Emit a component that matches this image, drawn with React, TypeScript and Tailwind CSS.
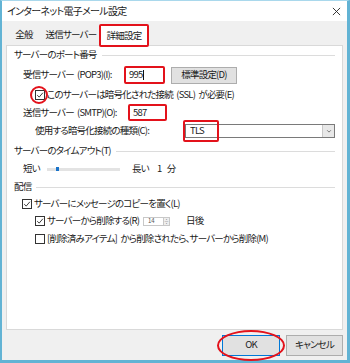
import React from "react";

const font = "font-['Noto_Sans_CJK_JP','Noto_Sans',sans-serif] [font-feature-settings:'palt'] [word-spacing:2px] text-[9.5px] tracking-[-0.8px] leading-none whitespace-nowrap text-[#1a1a1a]";

function Check({ on }: { on?: boolean }) {
    return (
        <span className="flex h-[10px] w-[10px] shrink-0 items-center justify-center border border-[#333] bg-white">
            {on && (
                <svg viewBox="0 0 10 10" className="h-[8px] w-[8px]">
                    <path d="M1.5 5.2 L4 7.6 L8.6 2.2" fill="none" stroke="#222" strokeWidth="1.1" />
                </svg>
            )}
        </span>
    );
}

function Section({ title }: { title: string }) {
    return (
        <div className="flex items-center gap-[5px]">
            <span>{title}</span>
            <div className="h-px flex-1 bg-[#dcdcdc]" />
        </div>
    );
}

function RedBox({ className }: { className: string }) {
    return <span className={`pointer-events-none absolute rounded-[2px] border-2 border-[#e3121b] ${className}`} />;
}

export default function App() {
    return (
        <div className={`flex h-[363px] w-[350px] flex-col border-t border-l-2 border-r-[3px] border-b-[3px] border-t-[#a9d8ec] border-l-[#62b3d4] border-r-[#62b3d4] border-b-[#62b3d4] bg-[#f0f0f0] ${font}`}>
            {/* title bar */}
            <div className="flex h-[20px] items-center justify-between bg-white pl-[5px] pr-[6px]">
                <span className="text-[10px] tracking-[-0.7px]">インターネット電子メール設定</span>
                <svg viewBox="0 0 10 10" className="h-[9px] w-[9px]">
                    <path d="M1 1 L9 9 M9 1 L1 9" stroke="#222" strokeWidth="1" />
                </svg>
            </div>

            {/* tabs */}
            <div className="flex h-[24px] items-end px-[4px]">
                <div className="flex h-[20px] w-[36px] items-center justify-center">全般</div>
                <div className="flex h-[20px] w-[58px] items-center justify-center">送信サーバー</div>
                <div className="relative z-10 -mb-px flex h-[21px] w-[48px] items-center justify-center border border-b-0 border-[#d9d9d9] bg-white">
                    詳細設定
                    <RedBox className="-left-[2px] -right-[2px] -top-[2px] -bottom-[1px]" />
                </div>
            </div>

            {/* panel */}
            <div className="mx-[4px] flex h-[285px] flex-col border border-[#d9d9d9] bg-white px-[7px]">
                <div className="flex h-[18px] flex-col justify-center">
                    <Section title="サーバーのポート番号" />
                </div>

                <div className="flex h-[22px] items-center pl-[9px]">
                    <span className="w-[102px]">受信サーバー (POP3)(I):</span>
                    <span className="relative flex h-[16px] w-[39px] items-center border border-[#7a7a7a] pl-[3px]">
                        995
                        <span className="ml-px h-[10px] w-px bg-[#111]" />
                        <RedBox className="-inset-[2px]" />
                    </span>
                    <span className="ml-[7px] flex h-[17px] w-[66px] items-center justify-center border border-[#adadad] bg-[#e1e1e1]">
                        標準設定(D)
                    </span>
                </div>

                <div className="flex h-[18px] items-center pl-[21px]">
                    <span className="relative flex">
                        <Check on />
                        <span className="pointer-events-none absolute -left-[5px] -top-[4px] h-[18px] w-[18px] rounded-full border-2 border-[#e3121b]" />
                    </span>
                    <span className="ml-[2px]">このサーバーは暗号化された接続 (SSL) が必要(E)</span>
                </div>

                <div className="flex h-[17px] items-center pl-[9px]">
                    <span className="w-[106px]">送信サーバー (SMTP)(O):</span>
                    <span className="relative flex h-[15px] w-[37px] items-center border border-[#7a7a7a] pl-[3px]">
                        587
                        <RedBox className="-inset-[2px]" />
                    </span>
                </div>

                <div className="flex h-[20px] items-center pl-[21px]">
                    <span className="w-[150px]">使用する暗号化接続の種類(C):</span>
                    <span className="relative flex h-[14px] w-[150px] items-center border border-[#7a7a7a] pl-[4px]">
                        <span className="flex-1">TLS</span>
                        <span className="flex h-full w-[12px] items-center justify-center border-l border-[#c8c8c8] bg-[#e8e8e8]">
                            <svg viewBox="0 0 8 8" className="h-[6px] w-[6px]">
                                <path d="M1.5 3 L4 5.5 L6.5 3" fill="none" stroke="#555" strokeWidth="1" />
                            </svg>
                        </span>
                        <RedBox className="-left-[3px] -top-[5px] -bottom-[5px] w-[36px]" />
                    </span>
                </div>

                <div className="flex h-[20px] flex-col justify-center">
                    <Section title="サーバーのタイムアウト(T)" />
                </div>

                <div className="flex h-[16px] items-center pl-[9px]">
                    <span className="w-[24px]">短い</span>
                    <span className="relative flex h-[3px] w-[73px] items-center bg-[#e3e3e3]">
                        <span className="ml-[9px] h-[4px] w-[3px] bg-[#1a73c9]" />
                    </span>
                    <span className="ml-[12px] w-[25px]">長い</span>
                    <span className="[word-spacing:4px]">1 分</span>
                </div>

                <div className="flex h-[20px] flex-col justify-center">
                    <Section title="配信" />
                </div>

                <div className="flex h-[14px] items-center pl-[8px]">
                    <Check on />
                    <span className="ml-[2px]">サーバーにメッセージのコピーを置く(L)</span>
                </div>

                <div className="flex h-[20px] items-center pl-[21px]">
                    <Check on />
                    <span className="ml-[2px] w-[96px]">サーバーから削除する(R)</span>
                    <span className="flex h-[9px] w-[27px] items-center border border-[#c8c8c8] text-[6px] tracking-normal text-[#555]">
                        <span className="flex-1 pl-[4px]">14</span>
                        <span className="h-full w-[6px] border-l border-[#c8c8c8] bg-[#eee] text-center text-[5px]">÷</span>
                    </span>
                    <span className="ml-[16px]">日後</span>
                </div>

                <div className="flex h-[16px] items-center pl-[21px]">
                    <Check />
                    <span className="ml-[2px]">[削除済みアイテム] から削除されたら、サーバーから削除(M)</span>
                </div>
            </div>

            {/* footer */}
            <div className="flex flex-1 items-center justify-end gap-[6px] pr-[4px]">
                <span className="relative flex h-[21px] w-[58px] items-center justify-center border border-[#0078d7] bg-[#e1e1e1]">
                    OK
                    <span className="pointer-events-none absolute -left-[6px] -right-[6px] -top-[6px] -bottom-[6px] rounded-[50%] border-2 border-[#e3121b]" />
                </span>
                <span className="flex h-[21px] w-[57px] items-center justify-center border border-[#adadad] bg-[#e1e1e1]">
                    キャンセル
                </span>
            </div>
        </div>
    );
}
